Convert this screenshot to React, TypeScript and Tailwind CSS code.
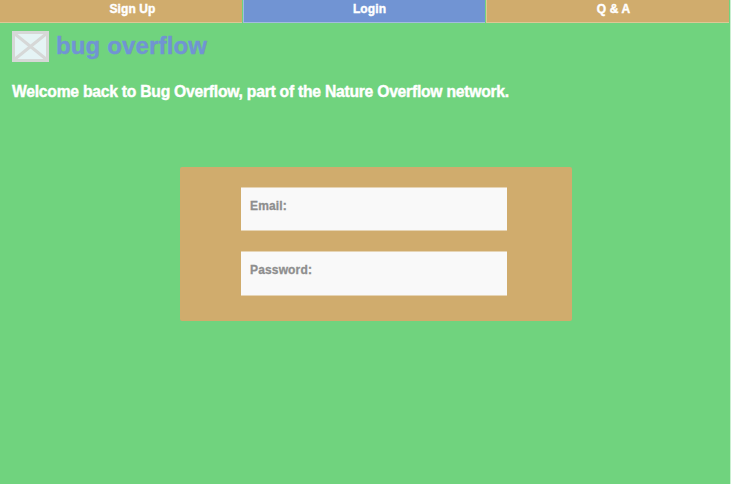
const tabs = [
  { label: "Sign Up", style: "w-[242px] bg-[#d0ac6d] border-[#ddc795] pl-[23px]" },
  { label: "Login", style: "w-[242px] bg-[#7194d3] border-[#a3bcdf] border-l pl-[10px]" },
  { label: "Q & A", style: "w-[243px] bg-[#d0ac6d] border-[#ddc795] border-l pl-[11px]" },
];

function Logo() {
  return (
    <svg className="block h-[31px] w-[37px]" viewBox="0 0 37 31" fill="none">
      <rect x="1.5" y="1.5" width="34" height="28" fill="#e5f4f5" stroke="#d6d8d7" strokeWidth="3" />
      <path d="M3 3L34 28M34 3L3 28" stroke="#d6d8d7" strokeWidth="3" />
    </svg>
  );
}

export default function App() {
  return (
    <div className="h-[484px] w-[731px] overflow-hidden border-r border-[#c9efd0] bg-[#70d37e] font-['Liberation_Sans',Arial,sans-serif] font-bold">
      <nav className="flex h-[23px] gap-px">
        {tabs.map((tab) => (
          <a
            key={tab.label}
            className={`block h-[23px] border-b text-center text-[12px] leading-[19px] tracking-[0.1px] text-white [-webkit-text-stroke:0.4px_#ffffff] ${tab.style}`}
          >
            {tab.label}
          </a>
        ))}
      </nav>
      <header className="flex h-[39px] gap-[7px] pl-3 pt-2">
        <Logo />
        <h1 className="text-[24px] leading-[30px] tracking-[0.15px] text-[#7194d3] [-webkit-text-stroke:0.4px_#7194d3]">
          bug overflow
        </h1>
      </header>
      <p className="mt-[20px] whitespace-nowrap pl-3 text-[15.7px] leading-[20px] tracking-[-0.25px] text-white [-webkit-text-stroke:0.4px_#ffffff]">
        Welcome back to Bug Overflow, part of the Nature Overflow network.
      </p>
      <form className="ml-[180px] mt-[65px] flex h-[154px] w-[392px] flex-col gap-[20px] rounded-[2px] bg-[#d0ac6d] pl-[61px] pt-5">
        <label className="block h-[44px] w-[266px] border-y border-[#e6d4b4] bg-[#f9f9f9] pl-[9px] text-[12px] leading-[36px] tracking-[0.15px] text-[#8e8e8e] [-webkit-text-stroke:0.3px_#8e8e8e]">
          Email:
        </label>
        <label className="block h-[45px] w-[266px] border-y border-[#e6d4b4] bg-[#f9f9f9] pl-[9px] text-[12px] leading-[36px] tracking-[0.15px] text-[#8e8e8e] [-webkit-text-stroke:0.3px_#8e8e8e]">
          Password:
        </label>
      </form>
    </div>
  );
}
